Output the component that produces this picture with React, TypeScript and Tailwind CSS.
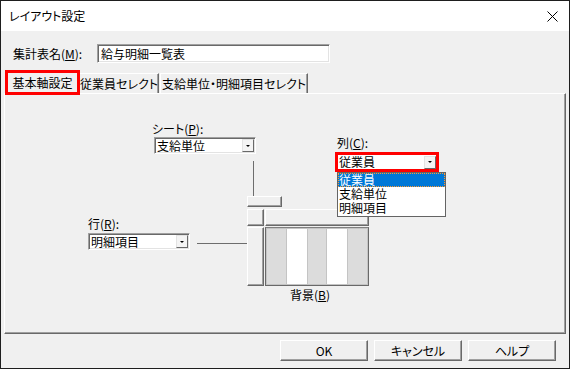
import React from "react";

const FONT = "font-['Noto_Sans_CJK_JP',sans-serif] [font-feature-settings:'palt']";
const RAISED =
  "border border-t-white border-l-white border-r-[#696969] border-b-[#696969] bg-[#f0f0f0] shadow-[inset_-1px_-1px_0_#a0a0a0]";

function DropBtn() {
  return (
    <div className="flex h-[13px] w-[12px] shrink-0 items-center justify-center border border-t-[#e3e3e3] border-l-[#e3e3e3] border-r-[#696969] border-b-[#696969] bg-[#f4f4f4]">
      <div className="h-0 w-0 border-x-[2px] border-t-[2px] border-x-transparent border-t-black" />
    </div>
  );
}

function Combo({ text }: { text: string }) {
  return (
    <div className="flex h-[17px] w-[102px] items-center border border-t-[#a0a0a0] border-l-[#a0a0a0] border-r-white border-b-white bg-white pr-[1px] shadow-[inset_1px_1px_0_#696969,inset_-1px_-1px_0_#e3e3e3]">
      <span className="flex-1 pl-[2px] text-[12px] leading-[15px] text-black">{text}</span>
      <DropBtn />
    </div>
  );
}

function Label({ pre, key1, colon = true, className }: { pre: string; key1: string; colon?: boolean; className: string }) {
  return (
    <div className={`absolute text-[12px] leading-[14px] text-black ${className}`}>
      {pre}(<span className="underline underline-offset-[1px]">{key1}</span>){colon ? ":" : ""}
    </div>
  );
}

function Button({ children }: { children: React.ReactNode }) {
  return (
    <div className="flex h-[21px] w-[88px] items-center justify-center border border-t-white border-l-white border-r-[#696969] border-b-[#696969] bg-[#f0f0f0] text-[12px] leading-[14px] text-black shadow-[inset_-1px_-1px_0_#a0a0a0]">
      {children}
    </div>
  );
}

export default function App() {
  return (
    <div className={`flex h-[369px] w-[570px] flex-col border border-[#1e1e1e] bg-[#f0f0f0] ${FONT}`}>
      {/* Title bar */}
      <div className="flex h-[30px] shrink-0 items-center justify-between bg-white pl-[8px] pr-[11px]">
        <span className="text-[12px] leading-[14px] text-black">レイアウト設定</span>
        <svg width="11" height="11" viewBox="0 0 11 11" className="block">
          <path d="M0.5 0.5 L10.5 10.5 M10.5 0.5 L0.5 10.5" stroke="#000" strokeWidth="1" />
        </svg>
      </div>

      {/* Name row */}
      <div className="mt-[13px] flex h-[19px] items-center pl-[12px]">
        <span className="w-[84px] text-[12px] leading-[14px] text-black">
          集計表名(<span className="underline underline-offset-[1px]">M</span>):
        </span>
        <div className="flex h-[19px] w-[233px] items-center border border-t-[#a0a0a0] border-l-[#a0a0a0] border-r-white border-b-white bg-white pl-[3px] shadow-[inset_1px_1px_0_#696969,inset_-1px_-1px_0_#e3e3e3]">
          <span className="text-[12px] leading-[14px] text-black">給与明細一覧表</span>
        </div>
      </div>

      {/* Tabs */}
      <div className="relative z-10 mt-[7px] flex h-[23px] items-start pl-[4px]">
        <div className="-mb-[2px] flex h-[25px] w-[75px] items-center justify-center border-[3px] border-[#ff0000] bg-[#f0f0f0] text-[12px] leading-[14px] text-black">
          基本軸設定
        </div>
        <div className="mt-[3px] flex h-[20px] w-[79px] items-center justify-center border-r border-t border-r-[#696969] border-t-white bg-[#f0f0f0] text-[12px] leading-[14px] text-black shadow-[inset_-1px_0_0_#a0a0a0]">
          従業員セレクト
        </div>
        <div className="ml-[1px] mt-[3px] flex h-[20px] w-[148px] items-center justify-center border-l border-r border-t border-l-white border-r-[#696969] border-t-white bg-[#f0f0f0] text-[12px] leading-[14px] text-black shadow-[inset_-1px_0_0_#a0a0a0]">
          支給単位・明細項目セレクト
        </div>
      </div>

      {/* Panel */}
      <div className="relative ml-[3px] h-[241px] w-[562px] shrink-0 border border-t-white border-l-white border-r-[#696969] border-b-[#696969] shadow-[inset_-1px_-1px_0_#a0a0a0]">
        <Label pre="シート" key1="P" className="left-[147px] top-[28px]" />
        <div className="absolute left-[149px] top-[43px]">
          <Combo text="支給単位" />
        </div>
        <div className="absolute left-[248px] top-[67px] h-[35px] w-[1px] bg-[#6d6d6d]" />

        <Label pre="行" key1="R" className="left-[83px] top-[123px]" />
        <div className="absolute left-[83px] top-[139px]">
          <Combo text="明細項目" />
        </div>
        <div className="absolute left-[192px] top-[149px] h-[1px] w-[50px] bg-[#6d6d6d]" />

        {/* Diagram */}
        <div className="absolute left-[242px] top-[102px] flex flex-col">
          <div className={`h-[11px] w-[35px] ${RAISED}`} />
          <div className="mt-[2px] flex gap-[1px]">
            <div className={`h-[17px] w-[17px] ${RAISED}`} />
            <div className={`h-[17px] w-[104px] ${RAISED}`} />
          </div>
          <div className="mt-[1px] flex gap-[1px]">
            <div className={`h-[59px] w-[17px] ${RAISED}`} />
            <div className="flex h-[59px] w-[104px] border border-t-[#808080] border-l-[#696969] border-r-[#696969] border-b-[#696969] bg-[#c4c4c4] p-[1px]">
              <div className="h-full w-[20px] border-r border-r-[#c4c4c4] bg-[#dcdcdc]" />
              <div className="h-full w-[20px] bg-white" />
              <div className="h-full w-[20px] border-x border-x-[#c4c4c4] bg-[#dcdcdc]" />
              <div className="h-full w-[20px] bg-white" />
              <div className="h-full w-[20px] border-l border-l-[#c4c4c4] bg-[#dcdcdc]" />
            </div>
          </div>
        </div>
        <Label pre="背景" key1="B" colon={false} className="left-[285px] top-[194px]" />

        {/* Column */}
        <Label pre="列" key1="C" className="left-[332px] top-[42px]" />
        <div className="absolute left-[330px] top-[58px] flex h-[20px] w-[104px] items-center border-[3px] border-[#ff0000] bg-white">
          <span className="flex-1 pl-[1px] text-[12px] leading-[14px] text-black">従業員</span>
          <DropBtn />
        </div>
        <div className="absolute left-[332px] top-[78px] z-20 flex h-[45px] w-[109px] flex-col border border-[#646464] bg-white">
          <div className="h-[14px] bg-[#0078d7] pl-[1px] text-[12px] leading-[14px] text-white outline outline-1 -outline-offset-1 outline-dotted outline-[#ff9a30]">
            従業員
          </div>
          <div className="h-[14px] pl-[1px] text-[12px] leading-[14px] text-black">支給単位</div>
          <div className="h-[14px] pl-[1px] text-[12px] leading-[14px] text-black">明細項目</div>
        </div>
      </div>

      {/* Buttons */}
      <div className="mt-[6px] flex justify-end gap-[6px] pr-[13px]">
        <Button>OK</Button>
        <Button>キャンセル</Button>
        <Button>ヘルプ</Button>
      </div>
    </div>
  );
}
